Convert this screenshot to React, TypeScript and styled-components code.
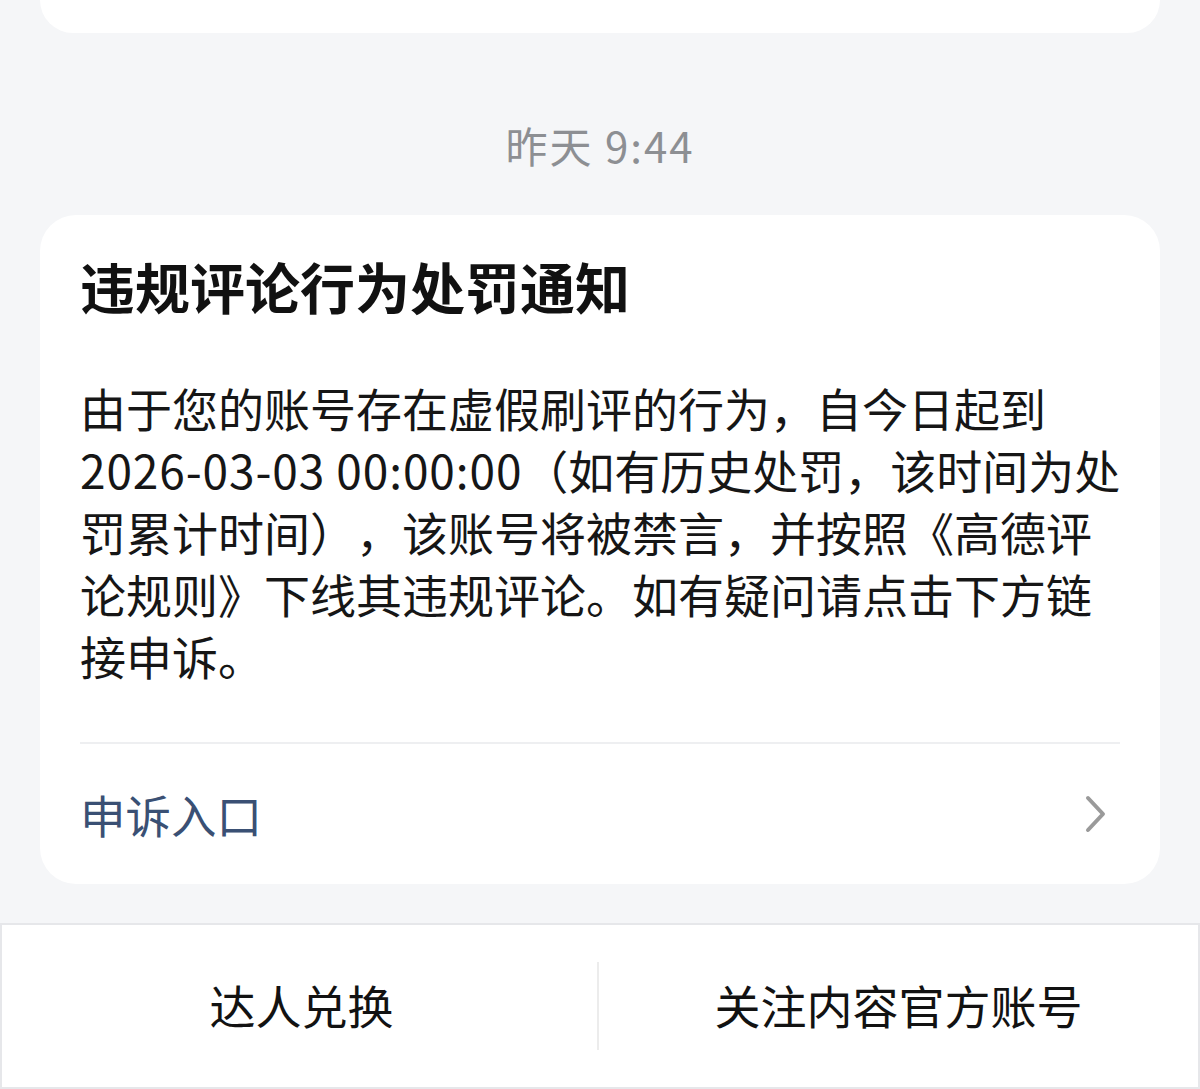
import React from "react";
import styled, { createGlobalStyle } from "styled-components";

const Global = createGlobalStyle`
  html, body {
    margin: 0;
    padding: 0;
    background: #f5f6f8;
  }
  body {
    font-family: "Noto Sans CJK SC", "Noto Sans", sans-serif;
    -webkit-font-smoothing: antialiased;
    text-spacing-trim: space-all;
  }
`;

const Page = styled.div`
  width: 1200px;
  height: 1089px;
  display: flex;
  flex-direction: column;
  background: #f5f6f8;
  overflow: hidden;
`;

const PrevCard = styled.div`
  margin: 0 40px;
  height: 33px;
  background: #ffffff;
  border-radius: 0 0 36px 36px;
`;

const TimeStamp = styled.div`
  height: 182px;
  box-sizing: border-box;
  padding-top: 40px;
  display: flex;
  align-items: center;
  justify-content: center;
  font-size: 42px;
  color: #8d8f93;
  letter-spacing: 2px;
`;

const Card = styled.section`
  margin: 0 40px;
  height: 669px;
  box-sizing: border-box;
  background: #ffffff;
  border-radius: 36px;
  padding: 32px 40px 0;
  display: flex;
  flex-direction: column;
`;

const Title = styled.h1`
  margin: 0;
  font-size: 55px;
  line-height: 76px;
  font-weight: 700;
  color: #111111;
`;

const Body = styled.p`
  margin: 53px 0 0;
  font-size: 46px;
  line-height: 62px;
  color: #161616;
  white-space: nowrap;
  text-spacing-trim: space-all;
`;

const Digits = styled.span`
  letter-spacing: 0.9px;
`;

const Divider = styled.div`
  margin-top: 56px;
  height: 2px;
  background: #eeeff1;
`;

const LinkRow = styled.div`
  flex: 1;
  display: flex;
  align-items: center;
  justify-content: space-between;
`;

const LinkText = styled.span`
  font-size: 45.5px;
  color: #3a5074;
`;

const Chevron = styled.svg`
  width: 24px;
  height: 40px;
  margin-right: 12px;
`;

const BottomBar = styled.nav`
  margin-top: 39px;
  flex: 1;
  box-sizing: border-box;
  background: #ffffff;
  border: 2px solid #e6e7ea;
  display: flex;
  align-items: center;
`;

const Action = styled.button`
  flex: 1;
  height: 100%;
  border: none;
  background: transparent;
  font-family: inherit;
  font-size: 46px;
  color: #121212;
  display: flex;
  align-items: center;
  justify-content: center;
  padding: 0 0 4px;
`;

const VSep = styled.div`
  width: 2px;
  height: 88px;
  margin-left: -4px;
  background: #ececec;
`;

export default function App() {
  return (
    <Page>
      <Global />
      <PrevCard />
      <TimeStamp>昨天 9:44</TimeStamp>
      <Card>
        <Title>违规评论行为处罚通知</Title>
        <Body>
          由于您的账号存在虚假刷评的行为，自今日起到
          <br />
          <Digits>2026-03-03 00:00:00</Digits>（如有历史处罚，该时间为处
          <br />
          罚累计时间），该账号将被禁言，并按照《高德评
          <br />
          论规则》下线其违规评论。如有疑问请点击下方链
          <br />
          接申诉。
        </Body>
        <Divider />
        <LinkRow>
          <LinkText>申诉入口</LinkText>
          <Chevron viewBox="0 0 24 40" fill="none">
            <path
              d="M4 4 L19 20 L4 36"
              stroke="#9a9a9a"
              strokeWidth="4"
              strokeLinecap="round"
              strokeLinejoin="round"
            />
          </Chevron>
        </LinkRow>
      </Card>
      <BottomBar>
        <Action>达人兑换</Action>
        <VSep />
        <Action>关注内容官方账号</Action>
      </BottomBar>
    </Page>
  );
}
